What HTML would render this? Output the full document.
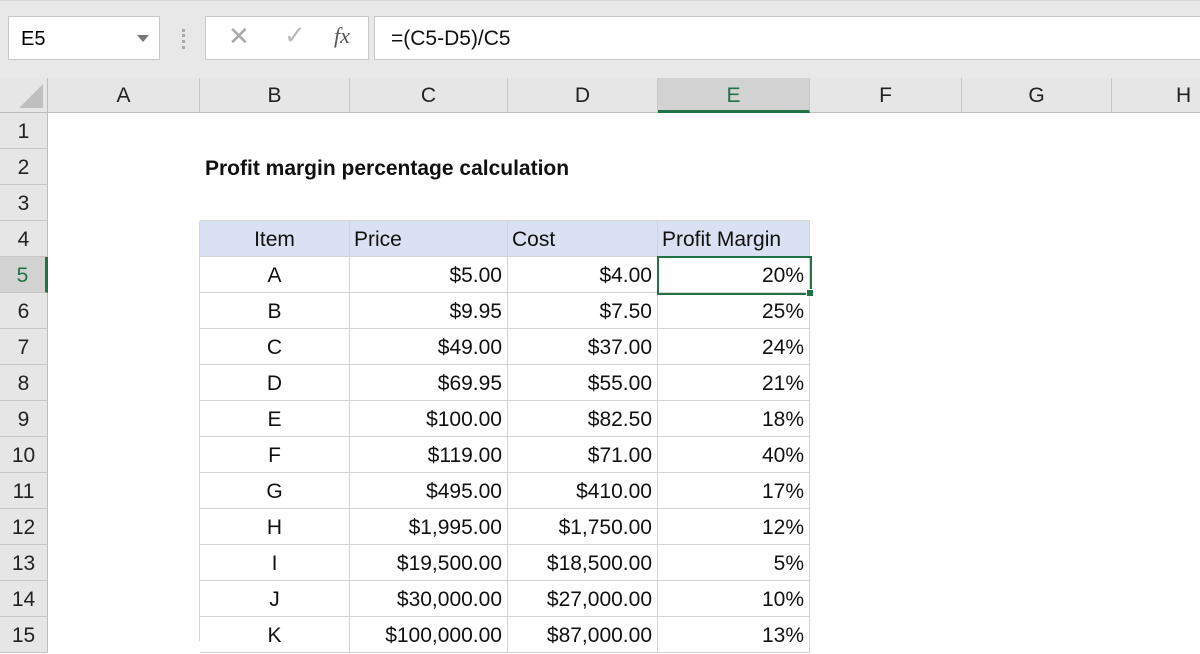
<!DOCTYPE html><html><head><style>
*{margin:0;padding:0;box-sizing:border-box}
body{width:1200px;height:630px;overflow:hidden;background:#fff;font-family:"Liberation Sans",sans-serif;position:relative}
.a{position:absolute}
.top{left:0;top:0;width:1200px;height:78px;background:#e8e8e8;border-top:1px solid #d8d8d8}
.box{background:#fff;border:1px solid #c8c8c8;height:44px;top:16px}
.ch{top:78px;height:35px;background:#e6e6e6;border-bottom:1px solid #bdbdbd;border-right:1px solid #c6c6c6;font-size:21px;color:#222;text-align:center;line-height:36px}
.rh{left:0;width:48px;height:36px;background:#e6e6e6;border-bottom:1px solid #c6c6c6;border-right:1px solid #bdbdbd;font-size:21px;color:#222;text-align:center;line-height:37px}
.c{height:36px;font-size:21px;line-height:38px;color:#111;border-right:1px solid #d4d4d4;border-bottom:1px solid #d4d4d4;padding:0 5px;white-space:nowrap;overflow:hidden}
.r{text-align:right}.m{text-align:center}
</style></head><body>
<div class="a top"></div>
<div class="a box" style="left:8px;width:152px;font-size:20px;line-height:44px;padding-left:12px">E5<span class="a" style="left:128px;top:18px;width:0;height:0;border-left:6px solid transparent;border-right:6px solid transparent;border-top:7px solid #777"></span></div>
<div class="a" style="left:182px;top:29px;width:3px;height:20px;border-left:3px dotted #aaa"></div>
<div class="a box" style="left:205px;width:164px">
<span class="a" style="left:22px;top:4px;font-size:26px;color:#aaa">✕</span>
<span class="a" style="left:78px;top:3px;font-size:26px;color:#bbb">✓</span>
<span class="a" style="left:128px;top:6px;font-size:22px;color:#555;font-family:'Liberation Serif',serif;font-style:italic">fx</span></div>
<div class="a box" style="left:374px;width:830px;font-size:21px;line-height:44px;padding-left:16px;color:#111">=(C5-D5)/C5</div>
<div class="a" style="left:0;top:78px;width:48px;height:35px;background:#e6e6e6;border-right:1px solid #bdbdbd;border-bottom:1px solid #bdbdbd"><div class="a" style="left:19px;top:6px;width:0;height:0;border-left:24px solid transparent;border-bottom:24px solid #bfbfbf"></div></div>
<div class="a ch" style="left:48px;width:152px">A</div>
<div class="a ch" style="left:200px;width:150px">B</div>
<div class="a ch" style="left:350px;width:158px">C</div>
<div class="a ch" style="left:508px;width:150px">D</div>
<div class="a ch" style="left:658px;width:152px;background:#d2d2d2;border-bottom:3px solid #217346;color:#217346">E</div>
<div class="a ch" style="left:810px;width:152px">F</div>
<div class="a ch" style="left:962px;width:150px">G</div>
<div class="a ch" style="left:1112px;width:150px;text-align:left;padding-left:64px">H</div>
<div id="rows"></div>
<div class="a" style="left:205px;top:155px;font-size:21px;font-weight:bold;line-height:28px;color:#111">Profit margin percentage calculation</div>
<script>
var d=[["A","$5.00","$4.00","20%"],["B","$9.95","$7.50","25%"],["C","$49.00","$37.00","24%"],["D","$69.95","$55.00","21%"],["E","$100.00","$82.50","18%"],["F","$119.00","$71.00","40%"],["G","$495.00","$410.00","17%"],["H","$1,995.00","$1,750.00","12%"],["I","$19,500.00","$18,500.00","5%"],["J","$30,000.00","$27,000.00","10%"],["K","$100,000.00","$87,000.00","13%"]];
var h="";
for(var n=1;n<=15;n++){var t=113+(n-1)*36;h+='<div class="a rh" style="top:'+t+'px;'+(n==5?'background:#d2d2d2;color:#217346;border-right:3px solid #217346':'')+'">'+n+'</div>';}
var L=[200,350,508,658,810];
h+='<div class="a" style="left:200px;top:220px;width:610px;border-top:1px solid #d4d4d4"></div>';
h+='<div class="a" style="left:199px;top:221px;height:420px;border-left:1px solid #d4d4d4"></div>';
var hd=["Item","Price","Cost","Profit Margin"];
for(var j=0;j<4;j++)h+='<div class="a c '+(j==0?'m':'')+'" style="left:'+L[j]+'px;top:221px;width:'+(L[j+1]-L[j])+'px;background:#d9e1f2;padding:0 4px">'+hd[j]+'</div>';
for(var i=0;i<d.length;i++){var t=257+i*36;for(var j=0;j<4;j++)h+='<div class="a c '+(j==0?'m':'r')+'" style="left:'+L[j]+'px;top:'+t+'px;width:'+(L[j+1]-L[j])+'px">'+d[i][j]+'</div>';}
h+='<div class="a" style="left:657px;top:256px;width:155px;height:39px;border:2px solid #217346"></div>';
h+='<div class="a" style="left:806px;top:289px;width:8px;height:8px;background:#217346;border:1px solid #fff"></div>';
document.getElementById("rows").innerHTML=h;
</script>
</body></html>
